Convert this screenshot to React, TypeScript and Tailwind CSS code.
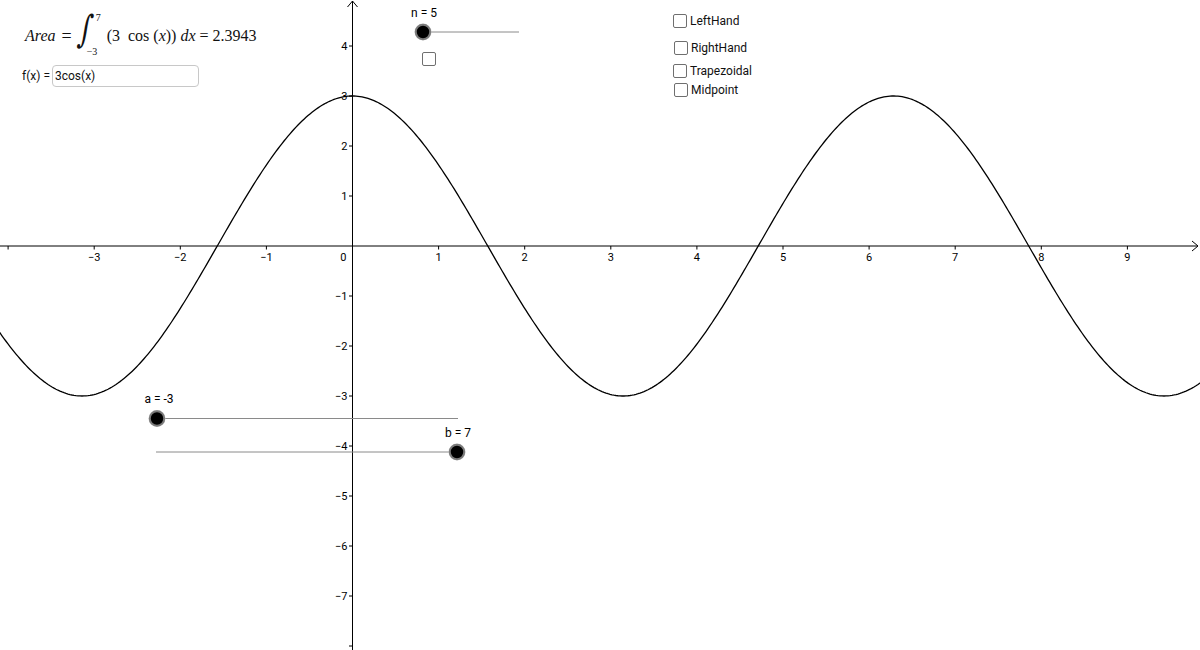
import React from "react";

const OX = 352.5;
const OY = 246;
const UX = 86.1;
const UY = 50;

const px = (x: number) => OX + x * UX;
const py = (y: number) => OY - y * UY;

const curve = () => {
  let d = "";
  for (let sx = -2; sx <= 1202; sx += 2) {
    const x = (sx - OX) / UX;
    const y = py(3 * Math.cos(x));
    d += (d ? " L" : "M") + sx.toFixed(1) + " " + y.toFixed(2);
  }
  return d;
};

const xTicks = [-4, -3, -2, -1, 1, 2, 3, 4, 5, 6, 7, 8, 9];
const yTicks = [4, 3, 2, 1, -1, -2, -3, -4, -5, -6, -7, -8];

const label = (n: number) => (n < 0 ? "\u2212" + Math.abs(n) : String(n));

const SliderPoint = ({ cx, cy }: { cx: number; cy: number }) => (
  <g>
    <circle cx={cx} cy={cy} r={8.5} fill="#c8c8c8" />
    <circle cx={cx} cy={cy} r={7.2} fill="#000" stroke="#7a7a7a" strokeWidth={2} />
  </g>
);

const Checkbox = ({ label }: { label: string }) => (
  <div className="flex items-center gap-[3px]">
    <div className="w-[14px] h-[14px] border border-[#6f6f6f] rounded-[2px] bg-white" />
    <span className="text-[12px] leading-none text-[#111]">{label}</span>
  </div>
);

export default function App() {
  return (
    <div
      className="relative w-[1200px] h-[650px] overflow-hidden bg-white text-black"
      style={{ fontFamily: "Roboto, 'Liberation Sans', sans-serif" }}
    >
      <svg className="absolute inset-0" width={1200} height={650} viewBox="0 0 1200 650">
        {/* axes */}
        <line x1={0} y1={OY} x2={1198} y2={OY} stroke="#000" strokeWidth={1} />
        <polyline points={`1192,${OY - 5} 1198,${OY} 1192,${OY + 5}`} fill="none" stroke="#000" strokeWidth={1} />
        <line x1={OX} y1={1} x2={OX} y2={650} stroke="#000" strokeWidth={1} />
        <polyline points={`${OX - 5},7 ${OX},1 ${OX + 5},7`} fill="none" stroke="#000" strokeWidth={1} />

        {xTicks.map((t) => (
          <g key={"x" + t}>
            <line x1={px(t)} y1={OY} x2={px(t)} y2={OY + 3.5} stroke="#000" strokeWidth={1} />
            {t !== -4 && (
              <text x={px(t)} y={OY + 15} fontSize={11} textAnchor="middle" fill="#000">
                {label(t)}
              </text>
            )}
          </g>
        ))}
        <text x={OX - 6} y={OY + 15} fontSize={11} textAnchor="end" fill="#000">
          0
        </text>
        {yTicks.map((t) => (
          <g key={"y" + t}>
            <line x1={OX - 3.5} y1={py(t)} x2={OX} y2={py(t)} stroke="#000" strokeWidth={1} />
            {t !== -8 && (
              <text x={OX - 5} y={py(t) + 4} fontSize={11} textAnchor="end" fill="#000">
                {label(t)}
              </text>
            )}
          </g>
        ))}

        {/* f(x) = 3cos(x) */}
        <path d={curve()} fill="none" stroke="#000" strokeWidth={1.3} />

        {/* n slider */}
        <line x1={423} y1={32} x2={519} y2={32} stroke="#8a8a8a" strokeWidth={1} />
        <SliderPoint cx={423} cy={32} />
        <text x={424} y={17} fontSize={12} textAnchor="middle" fill="#000">
          n = 5
        </text>

        {/* a slider */}
        <line x1={157} y1={418.5} x2={458} y2={418.5} stroke="#8a8a8a" strokeWidth={1} />
        <SliderPoint cx={157} cy={418.5} />
        <text x={159} y={403} fontSize={12} textAnchor="middle" fill="#000">
          a = -3
        </text>

        {/* b slider */}
        <line x1={156} y1={452} x2={457} y2={452} stroke="#8a8a8a" strokeWidth={1} />
        <SliderPoint cx={457} cy={452} />
        <text x={458} y={437} fontSize={12} textAnchor="middle" fill="#000">
          b = 7
        </text>
      </svg>

      {/* top-left: formula + input bar */}
      <div className="absolute left-[22px] top-[14px] flex flex-col gap-[7px]">
        <div
          className="flex items-center pl-[3px] text-[16px] text-[#111]"
          style={{ fontFamily: "'Liberation Serif', 'DejaVu Serif', serif" }}
        >
          <span className="italic">Area</span>
          <span className="ml-[6px] mr-[8px] text-[18px]">=</span>
          <span className="relative w-[27px] h-[44px]">
            <span
              className="absolute left-[-1px] top-[2px] text-[26px] leading-none scale-y-[1.45] -skew-x-12"
              style={{ fontFamily: "'DejaVu Serif', serif" }}
            >
              ∫
            </span>
            <span className="absolute left-[16px] top-[-1px] text-[10px] leading-none">7</span>
            <span className="absolute left-[7px] top-[33px] text-[10px] leading-none">−3</span>
          </span>
          <span className="whitespace-pre">
            (3  cos (<i>x</i>)) <i>dx</i> = 2.3943
          </span>
        </div>
        <div className="flex items-center gap-[2px]">
          <span className="text-[12px] text-[#111]">f(x) =</span>
          <div className="w-[147px] h-[22px] border border-[#c8c8c8] rounded-[4px] flex items-center px-[2px] text-[12px] text-[#111] bg-white">
            3cos(x)
          </div>
        </div>
      </div>

      {/* small checkbox under n slider */}
      <div className="absolute left-[422px] top-[52px] w-[14px] h-[14px] border border-[#6f6f6f] rounded-[2px] bg-white" />

      {/* method checkboxes */}
      <div className="absolute left-[673px] top-[14px] flex flex-col">
        <Checkbox label="LeftHand" />
        <div className="mt-[13px] ml-[1px]">
          <Checkbox label="RightHand" />
        </div>
        <div className="mt-[9px]">
          <Checkbox label="Trapezoidal" />
        </div>
        <div className="mt-[5px] ml-[1px]">
          <Checkbox label="Midpoint" />
        </div>
      </div>
    </div>
  );
}
